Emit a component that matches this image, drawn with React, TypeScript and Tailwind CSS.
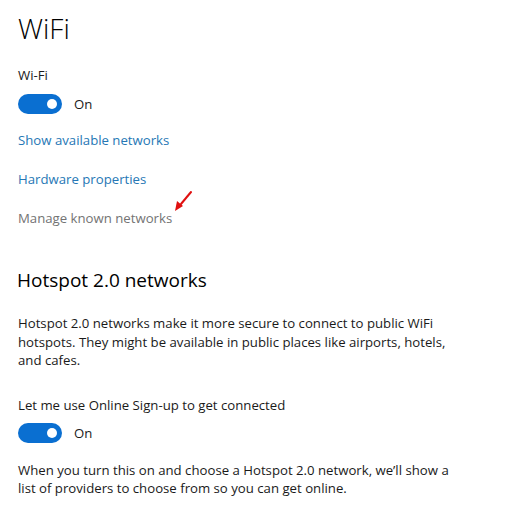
export default function App() {
    return (
        <div
            className="w-[524px] h-[521px] bg-white text-[#1a1a1a] pl-[18px] pt-[10px] overflow-hidden"
            style={{ fontFamily: '"Open Sans", "Noto Sans", sans-serif' }}
        >
            <h1 className="text-[28px] font-light leading-[36px] text-black">WiFi</h1>

            <div className="mt-[19px] text-[13.2px] leading-[20px]">Wi-Fi</div>
            <Toggle className="mt-[9px]" />

            <div className="mt-[16px] flex flex-col gap-[19px] text-[13.2px] leading-[20px]">
                <a className="text-[#2677b5]">Show available networks</a>
                <a className="text-[#2677b5]">Hardware properties</a>
                <div className="relative w-fit text-[#737373]">
                    Manage known networks
                    {/* red annotation arrow */}
                    <svg
                        className="absolute left-[calc(100%+1px)] top-[-18px]"
                        width="22"
                        height="24"
                        viewBox="0 0 22 24"
                    >
                        <line x1="18" y1="2" x2="8" y2="14" stroke="#e01010" strokeWidth="2" strokeLinecap="round" />
                        <path d="M2 21 L4 11 L10 16 Z" fill="#e01010" />
                    </svg>
                </div>
            </div>

            <h2 className="mt-[38px] -ml-px text-[19px] leading-[28px] text-black">Hotspot 2.0 networks</h2>

            <p className="mt-[20px] text-[13.2px] leading-[18.5px]">
                Hotspot 2.0 networks make it more secure to connect to public WiFi
                <br />
                hotspots. They might be available in public places like airports, hotels,
                <br />
                and cafes.
            </p>

            <div className="mt-[25px] text-[13.2px] leading-[20px]">Let me use Online Sign-up to get connected</div>
            <Toggle className="mt-[8px]" />

            <p className="mt-[18px] text-[13.2px] leading-[18.5px]">
                When you turn this on and choose a Hotspot 2.0 network, we’ll show a
                <br />
                list of providers to choose from so you can get online.
            </p>
        </div>
    );
}

function Toggle({ className = "" }: { className?: string }) {
    return (
        <div className={`flex items-center gap-[12px] ${className}`}>
            <div className="w-[44px] h-[20px] rounded-full bg-[#0a6fd1] flex items-center justify-end pr-[5px]">
                <div className="w-[10px] h-[10px] rounded-full bg-white" />
            </div>
            <span className="text-[13.2px] leading-[20px]">On</span>
        </div>
    );
}
